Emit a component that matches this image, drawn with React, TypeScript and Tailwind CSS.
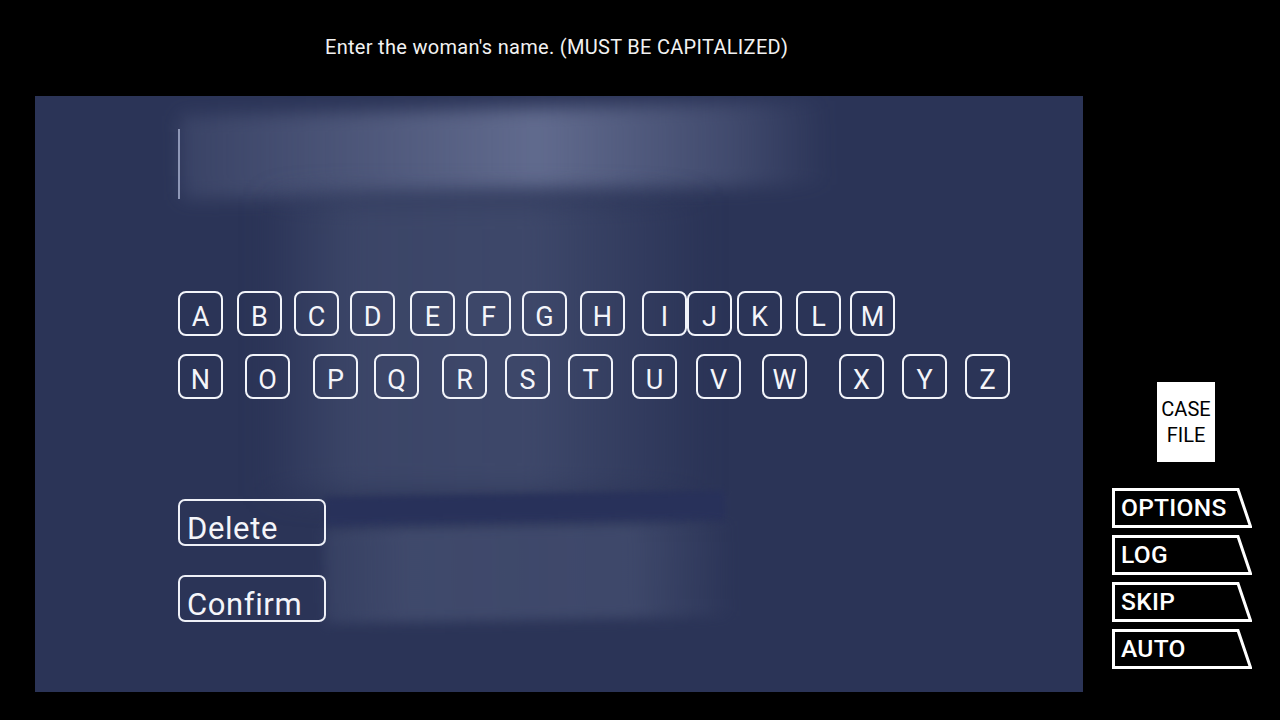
import * as React from 'react';

const FONT = "font-['Roboto','Liberation_Sans',sans-serif]";

// Letter keys with their left spacing (the game's keyboard isn't evenly spaced)
const ROW_ONE: Array<{ ch: string; ml: string }> = [
  { ch: 'A', ml: 'ml-0' },
  { ch: 'B', ml: 'ml-[14px]' },
  { ch: 'C', ml: 'ml-[12px]' },
  { ch: 'D', ml: 'ml-[11px]' },
  { ch: 'E', ml: 'ml-[15px]' },
  { ch: 'F', ml: 'ml-[11px]' },
  { ch: 'G', ml: 'ml-[11px]' },
  { ch: 'H', ml: 'ml-[13px]' },
  { ch: 'I', ml: 'ml-[17px]' },
  { ch: 'J', ml: 'ml-[0px]' },
  { ch: 'K', ml: 'ml-[5px]' },
  { ch: 'L', ml: 'ml-[14px]' },
  { ch: 'M', ml: 'ml-[9px]' },
];

const ROW_TWO: Array<{ ch: string; ml: string }> = [
  { ch: 'N', ml: 'ml-0' },
  { ch: 'O', ml: 'ml-[22px]' },
  { ch: 'P', ml: 'ml-[23px]' },
  { ch: 'Q', ml: 'ml-[16px]' },
  { ch: 'R', ml: 'ml-[23px]' },
  { ch: 'S', ml: 'ml-[18px]' },
  { ch: 'T', ml: 'ml-[18px]' },
  { ch: 'U', ml: 'ml-[19px]' },
  { ch: 'V', ml: 'ml-[19px]' },
  { ch: 'W', ml: 'ml-[21px]' },
  { ch: 'X', ml: 'ml-[32px]' },
  { ch: 'Y', ml: 'ml-[18px]' },
  { ch: 'Z', ml: 'ml-[18px]' },
];

function Key({ ch, ml }: { ch: string; ml: string }) {
  return (
    <div
      className={`${ml} flex h-[45px] w-[45px] shrink-0 items-end justify-center rounded-[8px] border-2 border-[#f2f4fa] pb-[3px] text-[27px] leading-none text-[#f4f5fa]`}
    >
      {ch}
    </div>
  );
}

function ActionButton({ label }: { label: string }) {
  return (
    <div className="flex h-[47px] w-[148px] items-end rounded-[7px] border-2 border-[#eef0f7] pl-[7px] text-[31px] leading-none tracking-[0.6px] text-[#f4f5fa]">
      {label}
    </div>
  );
}

/**
 * Slanted menu button - white outline with a sloped right edge
 */
function MenuButton({ label }: { label: string }) {
  return (
    <div className="relative flex h-[40px] w-[140px] items-center pl-[9px]">
      <svg
        className="absolute inset-0"
        width="140"
        height="40"
        viewBox="0 0 140 40"
        fill="none"
      >
        <polygon
          points="1.5,1.5 126,1.5 138.5,38.5 1.5,38.5"
          stroke="#ffffff"
          strokeWidth="3"
          strokeLinejoin="miter"
        />
      </svg>
      <span className="relative text-[24.5px] font-medium leading-none tracking-[0.3px] text-white">
        {label}
      </span>
    </div>
  );
}

export default function App() {
  return (
    <div className={`${FONT} flex h-[720px] w-[1280px] flex-col bg-black`}>
      {/* Prompt */}
      <div className="flex h-[96px] pl-[325px] pt-[37px]">
        <p className="text-[20px] leading-none tracking-[0.3px] text-[#f2f2f2]">
          Enter the woman&apos;s name. (MUST BE CAPITALIZED)
        </p>
      </div>

      <div className="flex">
        {/* Name entry panel */}
        <div className="relative ml-[35px] h-[596px] w-[1048px] overflow-hidden bg-[#2b3457]">
          {/* soft light streaks */}
          <div className="pointer-events-none absolute left-[145px] top-[12px] h-[84px] w-[650px] -rotate-[1.3deg] bg-[linear-gradient(90deg,rgba(100,110,145,0.25),rgba(115,125,160,0.75)_55%,rgba(105,115,150,0.35)_85%,rgba(90,100,140,0))] blur-[9px]" />
          <div className="pointer-events-none absolute left-[225px] top-[100px] h-[300px] w-[450px] bg-[linear-gradient(90deg,rgba(60,70,105,0),rgba(62,72,106,0.85)_20%,rgba(64,74,108,0.9)_60%,rgba(60,70,105,0))] blur-[14px]" />
          <div className="pointer-events-none absolute left-[290px] top-[398px] h-[30px] w-[400px] -rotate-[1deg] bg-[#28315a] blur-[3px]" />
          <div className="pointer-events-none absolute left-[290px] top-[429px] h-[95px] w-[410px] -rotate-[1deg] bg-[linear-gradient(90deg,rgba(62,72,106,0.6),rgba(64,74,108,0.95)_20%,rgba(64,74,108,0.9)_75%,rgba(60,70,105,0))] blur-[6px]" />

          <div className="relative flex h-full flex-col pl-[143px]">
            {/* text cursor */}
            <div className="mt-[33px] h-[70px] w-[2px] bg-[#8e97b6]" />

            {/* keyboard */}
            <div className="mt-[92px] flex">
              {ROW_ONE.map((k) => (
                <Key key={k.ch} ch={k.ch} ml={k.ml} />
              ))}
            </div>
            <div className="mt-[18px] flex">
              {ROW_TWO.map((k) => (
                <Key key={k.ch} ch={k.ch} ml={k.ml} />
              ))}
            </div>

            {/* actions */}
            <div className="mt-[100px] flex flex-col gap-[29px]">
              <ActionButton label="Delete" />
              <ActionButton label="Confirm" />
            </div>
          </div>
        </div>

        {/* Side menu */}
        <div className="ml-[29px] flex flex-col">
          <div className="ml-[45px] mt-[286px] flex h-[80px] w-[58px] flex-col items-center justify-center bg-white text-[20px] leading-[26px] text-black">
            <span>CASE</span>
            <span>FILE</span>
          </div>
          <div className="mt-[26px] flex flex-col gap-[7px]">
            <MenuButton label="OPTIONS" />
            <MenuButton label="LOG" />
            <MenuButton label="SKIP" />
            <MenuButton label="AUTO" />
          </div>
        </div>
      </div>
    </div>
  );
}
